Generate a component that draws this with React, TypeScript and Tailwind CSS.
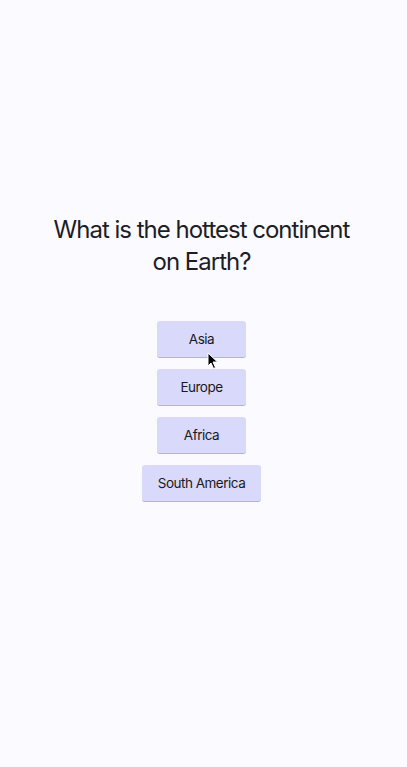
import { useState } from 'react';

const options = ['Asia', 'Europe', 'Africa', 'South America'];

function Cursor() {
  return (
    <svg
      className="absolute left-[207px] top-[352px] pointer-events-none"
      width="12"
      height="18"
      viewBox="0 0 12 18"
    >
      <path d="M1 1 L1 14 L4 11 L6.5 16.5 L8.5 15.5 L6 10 L10.5 10 Z" fill="#000" stroke="#fff" strokeWidth="1" />
    </svg>
  );
}

export default function App() {
  const [picked, setPicked] = useState<string | null>(null);

  return (
    <div className="relative min-h-screen bg-[#fafaff] flex flex-col items-center pt-[214px] pr-[4px] font-['Inter',sans-serif]">
      <h1 className="max-w-[310px] text-center text-[24px] leading-[32px] tracking-[-1px] text-[#1d1d27] font-normal">
        What is the hottest continent on Earth?
      </h1>

      <div className="mt-[43px] flex flex-col items-center gap-[11px]">
        {options.map((o) => (
          <button
            key={o}
            onClick={() => setPicked(o)}
            className={`min-w-[89px] h-[37px] px-[16px] rounded-[3px] text-[13.5px] tracking-[-0.5px] text-[#1a1a22] border-b border-[#b4b4c8] ${
              picked === o ? 'bg-[#c4c4f7]' : 'bg-[#d9d9fb]'
            }`}
          >
            {o}
          </button>
        ))}
      </div>

      <Cursor />
    </div>
  );
}
